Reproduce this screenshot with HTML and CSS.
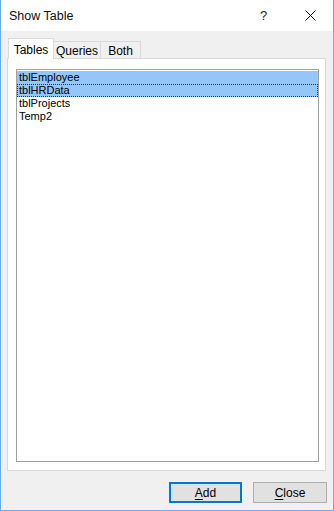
FILE: index.html
```html
<!DOCTYPE html>
<html lang="en">
<head>
    <meta charset="UTF-8">
    <meta name="viewport" content="width=device-width, initial-scale=1.0">
    <title>Show Table</title>
    <link rel="stylesheet" href="styles.css">
</head>
<body>

<div class="window">
    <div class="titlebar">
        <span class="title">Show Table</span>
        <span class="help">?</span>
        <span class="close-x">
            <svg width="11" height="11" viewBox="0 0 11 11">
                <path d="M0.5 0.5 L10.5 10.5 M10.5 0.5 L0.5 10.5" stroke="#111" stroke-width="1" fill="none"/>
            </svg>
        </span>
    </div>

    <div class="content">
        <div class="tabs">
            <div class="tab active">Tables</div>
            <div class="tab tab-queries">Queries</div>
            <div class="tab tab-both">Both</div>
        </div>

        <div class="panel">
            <div class="listbox">
                <div class="item selected">tblEmployee</div>
                <div class="item selected focused">tblHRData</div>
                <div class="item">tblProjects</div>
                <div class="item">Temp2</div>
            </div>
        </div>

        <div class="buttons">
            <button class="btn default"><u>A</u>dd</button>
            <button class="btn"><u>C</u>lose</button>
        </div>
    </div>
</div>

</body>
</html>
```

FILE: styles.css
```css
body {
    margin: 0;
    font-family: "Liberation Sans", Arial, sans-serif;
    font-size: 12px;
    color: #000;
}

.window {
    width: 334px;
    height: 511px;
    box-sizing: border-box;
    border: 1px solid #6aaee8;
    border-top: none;
    display: flex;
    flex-direction: column;
    background-color: #f0f0f0;
}

.titlebar {
    height: 31px;
    background-color: #fff;
    display: flex;
    align-items: center;
    padding-left: 8px;
    font-size: 12.5px;
}

.title {
    flex: 1;
    color: #111;
    padding-top: 1px;
}

.help {
    width: 10px;
    margin-right: 35px;
    font-size: 13px;
    color: #222;
}

.close-x {
    width: 11px;
    height: 11px;
    margin-right: 17px;
    display: flex;
}

.content {
    flex: 1;
    display: flex;
    flex-direction: column;
    padding: 7px 7px 7px 6px;
}

.tabs {
    display: flex;
    align-items: flex-end;
    height: 21px;
    margin-bottom: -1px;
    margin-left: 1px;
    position: relative;
    z-index: 1;
}

.tab {
    height: 17px;
    box-sizing: border-box;
    border: 1px solid #d9d9d9;
    border-bottom: none;
    margin-bottom: 1px;
    padding-top: 2px;
    background-color: #f0f0f0;
    margin-left: -1px;
    text-align: center;
    white-space: nowrap;
}

.tab.active {
    width: 46px;
    height: 21px;
    margin-left: 0;
    margin-bottom: 0;
    background-color: #fff;
    padding-top: 4px;
}

.tab-queries {
    width: 48px;
}

.tab-both {
    width: 41px;
}

.panel {
    flex: 1;
    background-color: #fff;
    border: 1px solid #d9d9d9;
    padding: 10px 6px 8px 8px;
    display: flex;
}

.listbox {
    flex: 1;
    border: 1px solid #a0a0a0;
    background-color: #fff;
    font-size: 11px;
    padding-top: 1px;
}

.item {
    height: 13px;
    line-height: 13px;
    padding-left: 2px;
    box-sizing: border-box;
}

.item.selected {
    background-color: #94c6fa;
}

.item.focused {
    outline: 1px dotted #333;
    outline-offset: -1px;
}

.buttons {
    display: flex;
    justify-content: flex-end;
    gap: 11px;
    margin-top: 11px;
    margin-right: -1px;
}

.btn {
    width: 74px;
    height: 21px;
    font-family: "Liberation Sans", Arial, sans-serif;
    font-size: 12px;
    background-color: #e1e1e1;
    border: 1px solid #adadad;
    padding: 0;
    color: #000;
}

.btn.default {
    width: 73px;
    border: 2px solid #0078d7;
}

.btn u {
    text-decoration-thickness: 1px;
    text-underline-offset: 2px;
}
```
